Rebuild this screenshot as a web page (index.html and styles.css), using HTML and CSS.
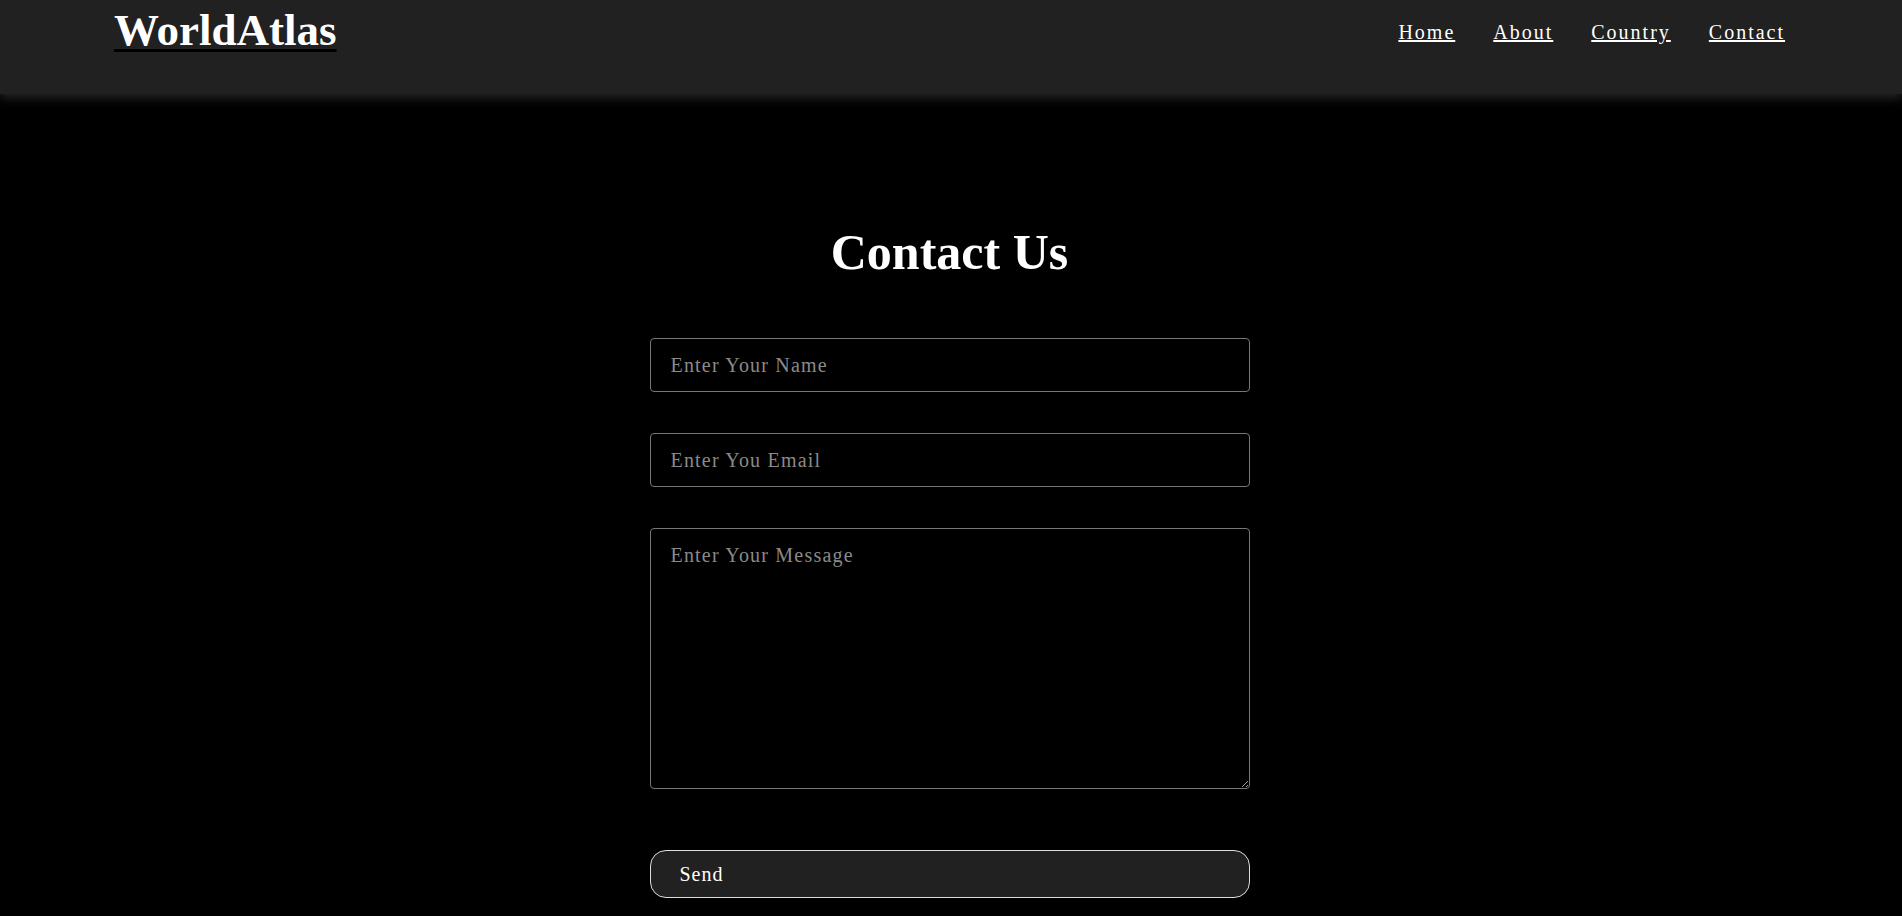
FILE: index.html
```html
<!DOCTYPE html>
<html lang="en">
<head>
<meta charset="utf-8">
<title>WorldAtlas - Contact</title>
<link rel="stylesheet" href="styles.css">
</head>
<body>
<header class="site-header">
  <div class="container header-inner">
    <a class="logo" href="#">WorldAtlas</a>
    <nav class="nav">
      <a href="#">Home</a>
      <a href="#">About</a>
      <a href="#">Country</a>
      <a href="#">Contact</a>
    </nav>
  </div>
</header>
<main class="contact">
  <h1 class="contact-title">Contact Us</h1>
  <form class="contact-form">
    <input class="field" type="text" placeholder="Enter Your Name">
    <input class="field" type="email" placeholder="Enter You Email">
    <textarea class="field field-area" placeholder="Enter Your Message"></textarea>
    <button class="send-btn" type="button">Send</button>
  </form>
</main>
</body>
</html>
```

FILE: styles.css
```css
* {
  box-sizing: border-box;
}

html, body {
  margin: 0;
  padding: 0;
}

body {
  background: #000;
  color: #fff;
  font-family: "Liberation Serif", "Times New Roman", serif;
  padding-right: 3px;
}

.site-header {
  background: #212121;
  height: 94px;
  margin-right: -3px;
  padding-right: 3px;
  box-shadow: 0 4px 10px rgba(110, 110, 110, 0.35);
  position: relative;
}

.container {
  width: 88%;
  margin: 0 auto;
}

.header-inner {
  display: flex;
  justify-content: space-between;
  align-items: flex-start;
  padding-top: 5px;
}

.logo {
  font-size: 45px;
  line-height: 50px;
  font-weight: 700;
  color: #fff;
  text-decoration: underline;
  text-decoration-color: #000;
  text-decoration-thickness: 3px;
  text-underline-offset: 4px;
}

.nav {
  display: flex;
  gap: 38px;
  margin-top: 15px;
}

.nav a {
  color: #fff;
  font-size: 20px;
  line-height: 24px;
  letter-spacing: 2px;
  text-decoration: underline;
}

.contact {
  padding: 128px 0 80px;
  display: flex;
  flex-direction: column;
  align-items: center;
}

.contact-title {
  margin: 0;
  font-size: 50px;
  line-height: 60px;
  font-weight: 700;
}

.contact-form {
  width: 600px;
  margin-top: 56px;
  display: flex;
  flex-direction: column;
}

.field {
  display: block;
  width: 100%;
  height: 54px;
  margin: 0 0 41px;
  padding: 0 20px;
  background: #000;
  color: #fff;
  border: 1px solid #777;
  border-radius: 4px;
  font-family: "Liberation Serif", "Times New Roman", serif;
  font-size: 20px;
  letter-spacing: 1.2px;
  outline: none;
}

.field::placeholder {
  color: #8a8a8a;
}

.field-area {
  height: 261px;
  padding: 15px 20px;
  margin-bottom: 61px;
  resize: vertical;
}

.send-btn {
  height: 48px;
  width: 100%;
  text-align: left;
  padding: 0 29px;
  background: #212121;
  color: #fff;
  border: 1px solid #ddd;
  border-radius: 16px;
  font-family: "Liberation Serif", "Times New Roman", serif;
  font-size: 20px;
  letter-spacing: 1px;
  cursor: pointer;
}
```
